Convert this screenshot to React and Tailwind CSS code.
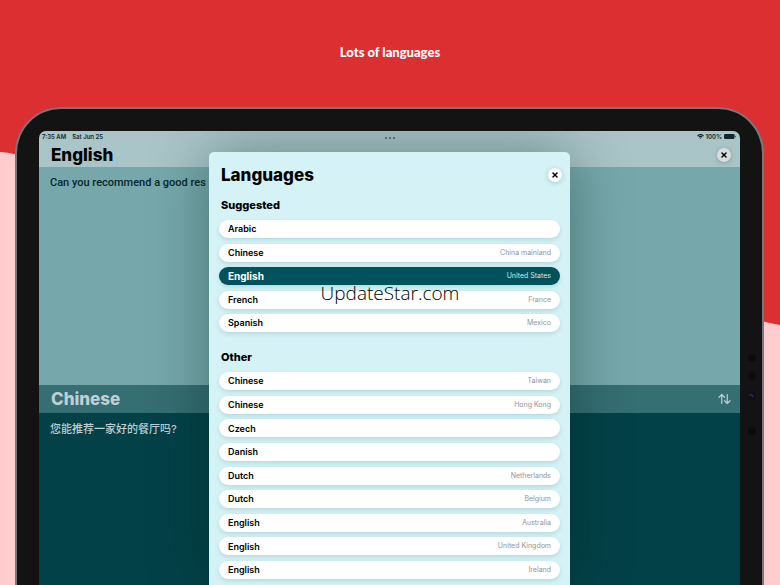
import React, { useState } from 'react';
import { X } from 'lucide-react';

const SUGGESTED = [
  { id: 'ar', name: 'Arabic' },
  { id: 'zh-CN', name: 'Chinese', region: 'China mainland' },
  { id: 'en-US', name: 'English', region: 'United States' },
  { id: 'fr-FR', name: 'French', region: 'France' },
  { id: 'es-MX', name: 'Spanish', region: 'Mexico' },
];

const OTHER = [
  { id: 'zh-TW', name: 'Chinese', region: 'Taiwan' },
  { id: 'zh-HK', name: 'Chinese', region: 'Hong Kong' },
  { id: 'cs', name: 'Czech' },
  { id: 'da', name: 'Danish' },
  { id: 'nl-NL', name: 'Dutch', region: 'Netherlands' },
  { id: 'nl-BE', name: 'Dutch', region: 'Belgium' },
  { id: 'en-AU', name: 'English', region: 'Australia' },
  { id: 'en-GB', name: 'English', region: 'United Kingdom' },
  { id: 'en-IE', name: 'English', region: 'Ireland' },
];

const LanguageRow = ({ language, selected, onSelect }) => (
  <li>
    <button
      onClick={() => onSelect(language.id)}
      className={`flex h-[18px] w-full items-center justify-between rounded-full px-[9px] shadow-[0_2px_4px_rgba(0,90,110,0.16)] ${selected ? 'bg-[#01525a] text-white' : 'bg-white text-black'}`}
    >
      <span className={selected ? 'text-[10px] font-bold' : 'text-[9px] font-semibold'}>{language.name}</span>
      <span className={`text-[7px] leading-[12px] ${selected ? 'text-[#d5e6e8]' : 'text-[#929496]'}`}>{language.region}</span>
    </button>
  </li>
);

const CloseButton = ({ className }) => (
  <button
    aria-label="Close"
    className={`flex size-[14px] items-center justify-center rounded-full text-black shadow-[0_1px_5px_rgba(0,60,70,0.25)] ${className}`}
  >
    <X size={8} strokeWidth={4.5} />
  </button>
);

const StatusBar = () => (
  <div className="relative flex h-[11px] items-center justify-between pr-[4px] pl-[3px] text-[6px] font-semibold text-[#10282b]">
    <div className="flex gap-[6px]">
      <span>7:35 AM</span>
      <span>Sat Jun 25</span>
    </div>
    <div className="absolute inset-x-0 top-[6px] flex justify-center gap-[2px]">
      <i className="size-[2px] rounded-full bg-[#4c6366]" />
      <i className="size-[2px] rounded-full bg-[#4c6366]" />
      <i className="size-[2px] rounded-full bg-[#4c6366]" />
    </div>
    <div className="flex items-center gap-[2px]">
      <svg width="7" height="5" viewBox="0 0 14 10" fill="none" stroke="currentColor" strokeWidth="2.2">
        <path d="M1 4 C4.5 0.5 9.5 0.5 13 4" />
        <path d="M3.5 6.4 C5.5 4.5 8.5 4.5 10.5 6.4" />
        <path d="M5.2 8 L7 10 L8.8 8 C7.8 7 6.2 7 5.2 8 Z" fill="currentColor" stroke="none" />
      </svg>
      <span>100%</span>
      <svg width="12" height="5" viewBox="0 0 24 10" fill="currentColor">
        <rect width="21" height="10" rx="2.5" />
        <path d="M22 3 C24 3.5 24 6.5 22 7 Z" />
      </svg>
    </div>
  </div>
);

const LanguagesModal = () => {
  const [selectedId, setSelectedId] = useState('en-US');

  return (
    <div className="absolute inset-x-0 top-[21px] bottom-0 mx-auto w-[361px] max-w-full rounded-t-[5px] bg-[#d5f3f6] px-[10px] shadow-[0_0_60px_rgba(0,35,30,0.4)]">
      <div className="-mr-[2px] flex items-center justify-between pt-[12px] pl-[2px]">
        <h2 className="text-[17px] leading-[22px] font-extrabold">Languages</h2>
        <CloseButton className="bg-white" />
      </div>
      <h3 className="mt-[11px] pl-[2px] text-[11px] leading-[16px] font-extrabold">Suggested</h3>
      <ul className="mt-[7px] flex h-[112px] flex-col justify-between">
        {SUGGESTED.map(l => (
          <LanguageRow key={l.id} language={l} selected={l.id === selectedId} onSelect={setSelectedId} />
        ))}
      </ul>
      <h3 className="mt-[17px] pl-[2px] text-[11px] leading-[16px] font-extrabold">Other</h3>
      <ul className="mt-[7px] flex h-[207px] flex-col justify-between">
        {OTHER.map(l => (
          <LanguageRow key={l.id} language={l} selected={l.id === selectedId} onSelect={setSelectedId} />
        ))}
      </ul>
    </div>
  );
};

const App = () => {
  return (
    <div className="relative flex h-screen flex-col overflow-hidden bg-[#dc2f31] font-[Inter,'Noto_Sans_CJK_SC',sans-serif]">
      <svg className="absolute inset-0 size-full" viewBox="0 0 780 585" preserveAspectRatio="none">
        <path d="M0 152 Q8 152 30 158 L740 316 Q764 322 780 325 V585 H0 Z" fill="#ffcdcd" />
      </svg>

      <h1 className="relative pt-[42px] text-center font-[Lato,sans-serif] text-[13px] leading-[20px] font-black text-white">
        Lots of languages
      </h1>

      <div className="relative mr-[16px] ml-[15px] mt-[45px] flex flex-1 flex-col rounded-t-[46px] border-2 border-b-0 border-[#77777c] bg-[#131313] px-[22px] pt-[22px]">
        <div className="relative flex flex-1 flex-col overflow-hidden rounded-t-[7px] bg-[#034148]">
          <div className="bg-[#a9c5c8]">
            <StatusBar />
            <div className="flex h-[25px] items-center justify-between pr-[9px] pl-[12px]">
              <h2 className="text-[17px] leading-[20px] font-extrabold">English</h2>
              <CloseButton className="bg-[#d8dcdc]" />
            </div>
          </div>
          <p className="h-[218px] bg-[#76a8ab] px-[11px] pt-[8px] font-[Roboto,sans-serif] text-[11px] leading-[16px] font-medium text-[#06262c]">
            Can you recommend a good res
          </p>
          <div className="flex h-[28px] items-center justify-between bg-[#356e73] pr-[9px] pl-[12px]">
            <h2 className="text-[17px] leading-[20px] font-extrabold text-[#bfcfd2]">Chinese</h2>
            <button aria-label="Swap languages" className="text-[#bfcfd2]">
              <svg width="13" height="12" viewBox="0 0 26 24" fill="none" stroke="currentColor" strokeWidth="2.4" strokeLinecap="round" strokeLinejoin="round">
                <path d="M7.5 21 V3 M2 8.5 L7.5 3 L13 8.5" />
                <path d="M18.5 3 V21 M13 15.5 L18.5 21 L24 15.5" />
              </svg>
            </button>
          </div>
          <p lang="zh" className="px-[11px] pt-[8px] text-[11px] leading-[16px] font-medium text-[#bfcfd2]">
            您能推荐一家好的餐厅吗?
          </p>

          <LanguagesModal />
        </div>

        {/* camera and sensors in the right bezel */}
        <svg className="absolute top-[243px] right-[3px]" width="14" height="90" viewBox="0 0 14 90">
          <circle cx="7" cy="6" r="4" fill="#0c0c0c" />
          <circle cx="7" cy="24" r="4" fill="#0c0c0c" />
          <circle cx="7" cy="44" r="4" fill="#0f1014" />
          <path d="M4 43 L7 43 L8 45" stroke="#2c3a78" fill="none" />
          <circle cx="7" cy="79" r="4" fill="#0c0c0c" />
        </svg>
      </div>

      <div className="pointer-events-none absolute inset-0 flex items-center justify-center font-['Open_Sans','Noto_Sans',sans-serif] text-[19px] leading-[28px] font-[350] text-black">
        UpdateStar.com
      </div>
    </div>
  );
};

export default App;
